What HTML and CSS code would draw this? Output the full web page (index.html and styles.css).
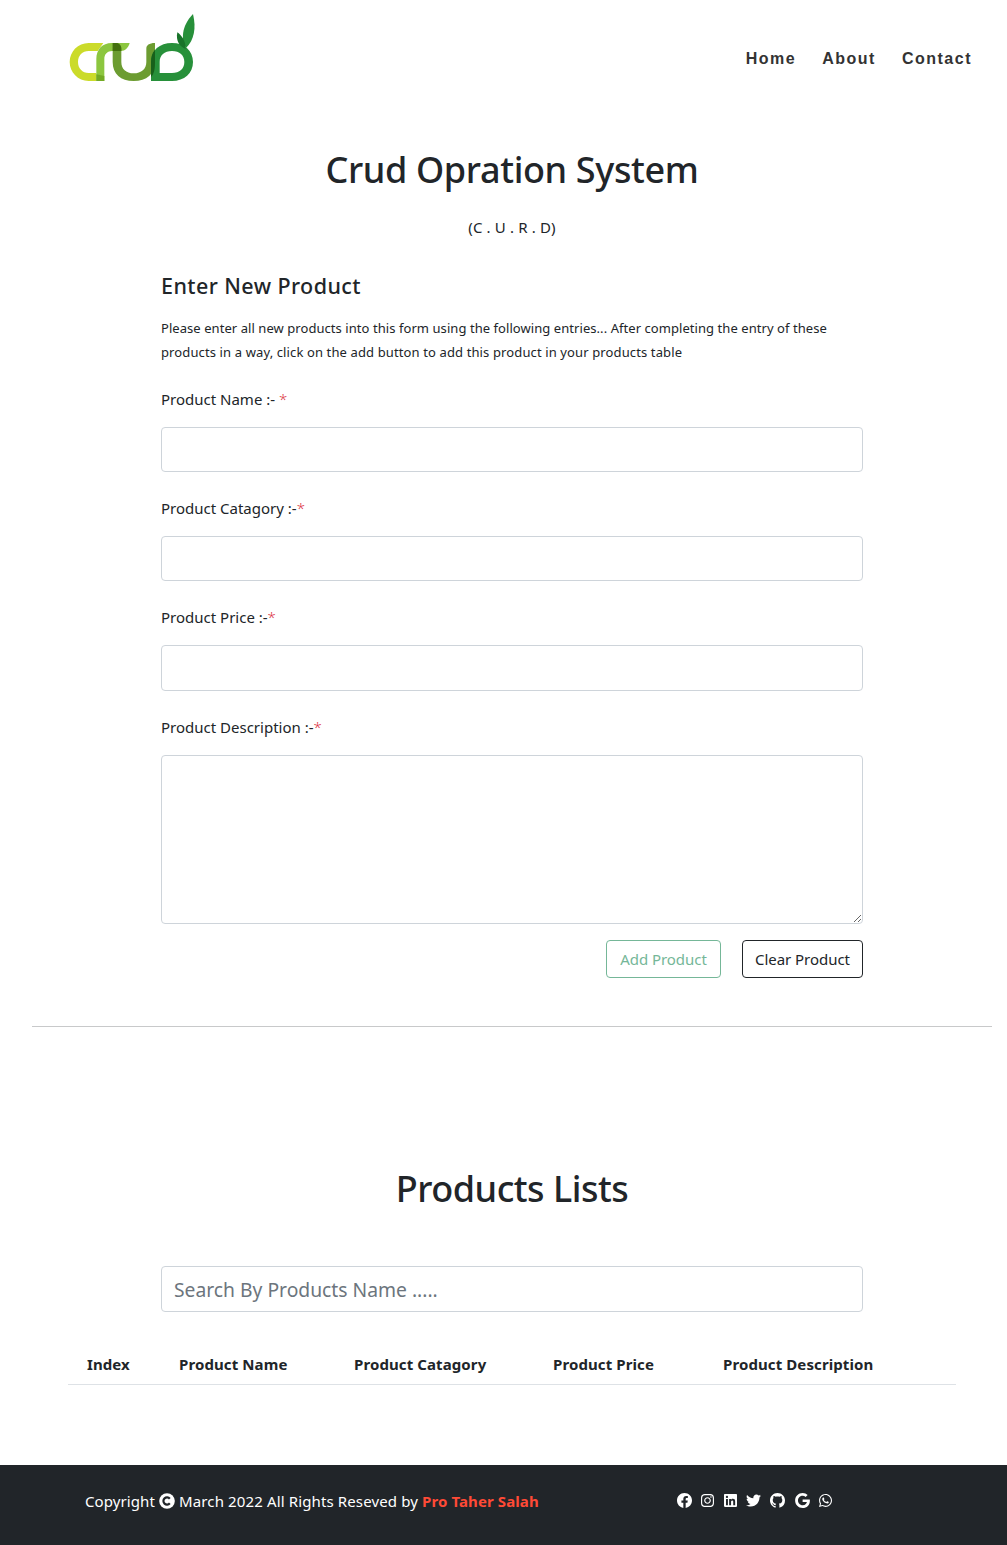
FILE: index.html
```html
<!DOCTYPE html>
<html lang="en">
<head>
<meta charset="utf-8">
<title>Crud Opration System</title>
<link rel="stylesheet" href="styles.css">
</head>
<body>
<header class="navbar">
  <a class="brand" href="#" aria-label="Crud">
    <svg width="150" height="85" viewBox="0 0 450 255" fill="none" stroke-width="25">
      <path d="M130 114H86C54 114 29 140 29 171S54 228 86 228H109V204H86C67 204 54 190 54 171S67 138 86 138H113Z" fill="#cbdb2a"/>
      <path d="M109 228V162C109 133 127 114 155 114H209C205 128 196 138 182 138H157C142 138 133 147 133 162V228Z" fill="#8cc63f"/>
      <path d="M158 114H172C180 117 184 123 184 131V171C184 192 198 205 221 205S259 192 259 171V131C259 121 267 114 285 114V171C285 207 260 228 221 228S158 207 158 171Z" fill="#6c9c31"/>
      <path fill-rule="evenodd" d="M273 228V171C273 136 299 114 336 114S399 137 399 171 373 228 336 228ZM299 204H336C359 204 373 191 373 171S359 138 336 138 299 151 299 171Z" fill="#27903a"/>
      <path d="M158 114H172C180 117 184 123 184 131V138H158Z" fill="#43700e"/>
      <path d="M109 208L133 213V228H109Z" fill="#73aa24"/>
      <path d="M285 134V171C285 193 282 207 273 216V171C273 155 277 143 285 134Z" fill="#17601b"/>
      <path d="M399 27C409 69 403 104 378 129C364 108 362 65 399 27Z" fill="#27903a"/>
      <path d="M352 82C366 92 377 108 377 132C361 127 346 108 352 82Z" fill="#187329"/>
    </svg>
  </a>
  <nav class="menu"><a href="#">Home</a><a href="#">About</a><a href="#">Contact</a></nav>
</header>
<main>
  <section class="entry">
    <h1 class="title">Crud Opration System</h1>
    <p class="subtitle">(C . U . R . D)</p>
    <form class="form">
      <h2 class="form-title">Enter New Product</h2>
      <p class="help">Please enter all new products into this form using the following entries... After completing the entry of these<br><span class="help-more">products in a way, click on the add button to add this product in your products table</span></p>
      <label class="label" for="name">Product Name :- <span class="req">*</span></label>
      <input class="field" id="name">
      <label class="label" for="cat">Product Catagory :-<span class="req">*</span></label>
      <input class="field" id="cat">
      <label class="label" for="price">Product Price :-<span class="req">*</span></label>
      <input class="field price" id="price">
      <label class="label" for="desc">Product Description :-<span class="req">*</span></label>
      <textarea class="field area" id="desc"></textarea>
      <div class="actions">
        <button class="btn add" type="button">Add Product</button>
        <button class="btn clear" type="button">Clear Product</button>
      </div>
    </form>
  </section>
  <hr class="rule">
  <section class="lists">
    <h1 class="title">Products Lists</h1>
    <input class="field search" placeholder="Search By Products Name .....">
    <table class="table">
      <colgroup><col class="c1"><col class="c2"><col class="c3"><col class="c4"><col></colgroup>
      <thead><tr><th>Index</th><th>Product Name</th><th>Product Catagory</th><th>Product Price</th><th>Product Description</th></tr></thead>
    </table>
  </section>
</main>
<footer class="footer">
  <p class="copy"><span>Copyright</span>
    <svg width="16" height="16" viewBox="0 0 16 16"><circle cx="8" cy="8" r="7.8" fill="#fff"/><path d="M10.8 5.7A3.6 3.6 0 1 0 10.8 10.3" fill="none" stroke="#212529" stroke-width="2.2"/></svg>
    <span class="rights">March 2022 All Rights Reseved by</span> <strong class="author">Pro Taher Salah</strong></p>
  <div class="social">
    <svg width="15" height="15" viewBox="8 8 496 496"><path d="M504 256C504 119 393 8 256 8S8 119 8 256c0 123.78 90.69 226.38 209.25 245V327.69h-63V256h63v-54.64c0-62.15 37-96.48 93.67-96.48 27.14 0 55.52 4.84 55.52 4.84v61h-31.28c-30.8 0-40.41 19.12-40.41 38.73V256h68.78l-11 71.69h-57.78V501C413.31 482.38 504 379.78 504 256z"/></svg>
    <svg width="13" height="15" viewBox="0 0 448 512"><path d="M224.1 141c-63.6 0-114.9 51.3-114.9 114.9s51.3 114.9 114.9 114.9S339 319.5 339 255.9 287.7 141 224.1 141zm0 189.6c-41.1 0-74.7-33.5-74.7-74.7s33.5-74.7 74.7-74.7 74.7 33.5 74.7 74.7-33.6 74.7-74.7 74.7zm146.4-194.3c0 14.9-12 26.8-26.8 26.8-14.9 0-26.8-12-26.8-26.8s12-26.8 26.8-26.8 26.8 12 26.8 26.8zm76.1 27.2c-1.7-35.9-9.9-67.7-36.2-93.9-26.2-26.2-58-34.4-93.9-36.2-37-2.1-147.9-2.1-184.9 0-35.8 1.7-67.6 9.9-93.9 36.1s-34.4 58-36.2 93.9c-2.1 37-2.1 147.9 0 184.9 1.7 35.9 9.9 67.7 36.2 93.9s58 34.4 93.9 36.2c37 2.1 147.9 2.1 184.9 0 35.9-1.7 67.7-9.9 93.9-36.2 26.2-26.2 34.4-58 36.2-93.9 2.1-37 2.1-147.8 0-184.8zM398.8 388c-7.8 19.6-22.9 34.7-42.6 42.6-29.5 11.7-99.5 9-132.1 9s-102.7 2.6-132.1-9c-19.6-7.8-34.7-22.9-42.6-42.6-11.7-29.5-9-99.5-9-132.1s-2.6-102.7 9-132.1c7.8-19.6 22.9-34.7 42.6-42.6 29.5-11.7 99.5-9 132.1-9s102.7-2.6 132.1 9c19.6 7.8 34.7 22.9 42.6 42.6 11.7 29.5 9 99.5 9 132.1s2.7 102.7-9 132.1z"/></svg>
    <svg class="linkedin" width="13" height="15" viewBox="0 0 448 512"><path d="M416 32H31.9C14.3 32 0 46.5 0 64.3v383.4C0 465.5 14.3 480 31.9 480H416c17.6 0 32-14.5 32-32.3V64.3c0-17.8-14.4-32.3-32-32.3zM135.4 416H69V202.2h66.5V416zm-33.2-243c-21.3 0-38.5-17.3-38.5-38.5S80.9 96 102.2 96c21.2 0 38.5 17.3 38.5 38.5 0 21.3-17.2 38.5-38.5 38.5zm282.1 243h-66.4V312c0-24.8-.5-56.7-34.5-56.7-34.6 0-39.9 27-39.9 54.9V416h-66.4V202.2h63.7v29.2h.9c8.9-16.8 30.6-34.5 62.9-34.5 67.2 0 79.7 44.3 79.7 101.9V416z"/></svg>
    <svg width="15" height="15" viewBox="0 0 512 512"><path d="M459.37 151.716c.325 4.548.325 9.097.325 13.645 0 138.72-105.583 298.558-298.558 298.558-59.452 0-114.68-17.219-161.137-47.106 8.447.974 16.568 1.299 25.34 1.299 49.055 0 94.213-16.568 130.274-44.832-46.132-.975-84.792-31.188-98.112-72.772 6.498.974 12.995 1.624 19.818 1.624 9.421 0 18.843-1.3 27.614-3.573-48.081-9.747-84.143-51.98-84.143-102.985v-1.299c13.969 7.797 30.214 12.67 47.431 13.319-28.264-18.843-46.781-51.005-46.781-87.391 0-19.492 5.197-37.36 14.294-52.954 51.655 63.675 129.3 105.258 216.365 109.807-1.624-7.797-2.599-15.918-2.599-24.04 0-57.828 46.782-104.934 104.934-104.934 30.213 0 57.502 12.67 76.67 33.137 23.715-4.548 46.456-13.32 66.599-25.34-7.798 24.366-24.366 44.833-46.132 57.827 21.117-2.273 41.584-8.122 60.426-16.243-14.292 20.791-32.161 39.308-52.628 54.253z"/></svg>
    <svg width="15" height="15" viewBox="0 0 16 16"><path d="M8 0C3.58 0 0 3.58 0 8c0 3.54 2.29 6.53 5.47 7.59.4.07.55-.17.55-.38 0-.19-.01-.82-.01-1.49-2.01.37-2.53-.49-2.69-.94-.09-.23-.48-.94-.82-1.13-.28-.15-.68-.52-.01-.53.63-.01 1.08.58 1.23.82.72 1.21 1.87.87 2.33.66.07-.52.28-.87.51-1.07-1.78-.2-3.64-.89-3.64-3.95 0-.87.31-1.59.82-2.15-.08-.2-.36-1.02.08-2.12 0 0 .67-.21 2.2.82.64-.18 1.32-.27 2-.27s1.36.09 2 .27c1.53-1.04 2.2-.82 2.2-.82.44 1.1.16 1.92.08 2.12.51.56.82 1.27.82 2.15 0 3.07-1.87 3.75-3.65 3.95.29.25.54.73.54 1.48 0 1.07-.01 1.93-.01 2.2 0 .21.15.46.55.38A8.01 8.01 0 0 0 16 8c0-4.42-3.58-8-8-8"/></svg>
    <svg class="google" width="15" height="15" viewBox="0 8 488 496"><path d="M488 261.8C488 403.3 391.1 504 248 504 110.8 504 0 393.2 0 256S110.8 8 248 8c66.8 0 123 24.5 166.3 64.9l-67.5 64.9C258.5 52.6 94.3 116.6 94.3 256c0 86.5 69.1 156.6 153.7 156.6 98.2 0 135-70.4 140.8-106.9H248v-85.3h236.1c2.3 12.7 3.9 24.9 3.9 41.4z"/></svg>
    <svg width="13" height="15" viewBox="0 0 448 512"><path d="M380.9 97.1C339 55.1 283.2 32 223.9 32c-122.4 0-222 99.6-222 222 0 39.1 10.2 77.3 29.6 111L0 480l117.7-30.9c32.4 17.7 68.9 27 106.1 27h.1c122.3 0 224.1-99.6 224.1-222 0-59.3-25.2-115-67.1-157zm-157 341.6c-33.2 0-65.7-8.9-94-25.7l-6.7-4-69.8 18.3L72 359.2l-4.4-7c-18.5-29.4-28.2-63.3-28.2-98.2 0-101.7 82.8-184.5 184.6-184.5 49.3 0 95.6 19.2 130.4 54.1 34.8 34.9 56.2 81.2 56.1 130.5 0 101.8-84.9 184.6-186.6 184.6zm101.2-138.2c-5.5-2.8-32.8-16.2-37.9-18-5.1-1.9-8.8-2.8-12.5 2.8-3.7 5.6-14.3 18-17.6 21.8-3.2 3.7-6.5 4.2-12 1.4-32.6-16.3-54-29.1-75.5-66-5.7-9.8 5.7-9.1 16.3-30.3 1.8-3.7.9-6.9-.5-9.7-1.4-2.8-12.5-30.1-17.1-41.2-4.5-10.8-9.1-9.3-12.5-9.5-3.2-.2-6.9-.2-10.6-.2-3.7 0-9.7 1.4-14.8 6.9-5.1 5.6-19.4 19-19.4 46.3 0 27.3 19.9 53.7 22.6 57.4 2.8 3.7 39.1 59.7 94.8 83.8 35.2 15.2 49 16.5 66.6 13.9 10.7-1.6 32.8-13.4 37.4-26.4 4.6-13 4.6-24.1 3.2-26.4-1.3-2.5-5-3.9-10.5-6.6z"/></svg>
  </div>
</footer>
</body>
</html>
```
FILE: styles.css
```css
* { box-sizing: border-box; }
body { margin: 0; background: #fff; color: #212529; font: 400 15px/24px "Noto Sans", "Open Sans", sans-serif; }
h1, h2, p { margin: 0; }
.navbar { display: flex; justify-content: space-between; height: 117px; padding: 5px 35px 0 60px; }
.brand { height: 85px; }
.menu { display: flex; gap: 26px; padding-top: 42px; font: 700 16px/24px "Liberation Sans", Arial, sans-serif; letter-spacing: 1.5px; }
.menu a { color: #333; text-decoration: none; }
.entry, .lists { width: 702px; margin-left: 161px; }
.title { font-weight: 500; font-size: 36px; line-height: 48px; letter-spacing: -0.36px; text-align: center; padding-top: 29px; }
.subtitle { margin-top: 21px; text-align: center; font-weight: 400; letter-spacing: 0.15px; }
.form { padding-top: 32px; }
.form-title { font-weight: 500; font-size: 21.5px; line-height: 29px; letter-spacing: 0.42px; }
.help { margin-top: 16px; font-size: 13px; letter-spacing: 0.06px; white-space: nowrap; }
.help-more { letter-spacing: 0.12px; }
.label { display: block; margin: 23px 0 16px; font-weight: 400; }
.req { color: #dc3545; font-weight: 300; }
.field { display: block; width: 100%; height: 45px; margin: 0 0 24px; padding: 0 12px; border: 1px solid #ced4da; border-radius: 4px; background: #fff; font: 400 19.3px/30px "Noto Sans", sans-serif; }
.field + .label { margin-top: 0; }
.price { height: 46px; }
.area { height: 169px; margin-bottom: 16px; resize: vertical; }
.field::placeholder { color: #6c757d; opacity: 1; }
.actions { display: flex; justify-content: flex-end; gap: 21px; }
.btn { height: 38px; padding: 0; border: 1px solid #212529; border-radius: 4px; background: #fff; color: #212529; font: 400 15px/24px "Noto Sans", sans-serif; letter-spacing: -0.05px; }
.add { width: 115px; border-color: #75b798; color: #75b798; }
.clear { width: 121px; }
.rule { height: 1px; margin: 48px 15px 0 32px; border: 0; background: #c8c9ca; }
.lists .title { padding-top: 138px; letter-spacing: -0.5px; }
.search { height: 46px; margin: 53px 0 0; }
.table { width: 888px; margin: 32px 0 0 -93px; border-collapse: collapse; table-layout: fixed; border-bottom: 1px solid #dee2e6; }
.table th { height: 40px; padding: 0 0 0 19px; font-weight: 700; letter-spacing: 0.1px; text-align: left; white-space: nowrap; }
.c1 { width: 92px; }
.c2 { width: 175px; }
.c3 { width: 199px; }
.c4 { width: 170px; }
.footer { display: flex; height: 80px; margin-top: 80px; padding: 0 0 0 85px; background: #212529; color: #fff; }
.copy { display: flex; width: 592px; gap: 4px; align-items: center; height: 72px; letter-spacing: 0.1px; white-space: nowrap; }
.rights { letter-spacing: 0.13px; }
.author { color: #ff4a36; }
.social { display: flex; align-items: center; gap: 9px; height: 71px; }
.social svg { fill: #fff; }
.linkedin { margin-left: 1px; }
.google { margin-left: 1px; }
```
